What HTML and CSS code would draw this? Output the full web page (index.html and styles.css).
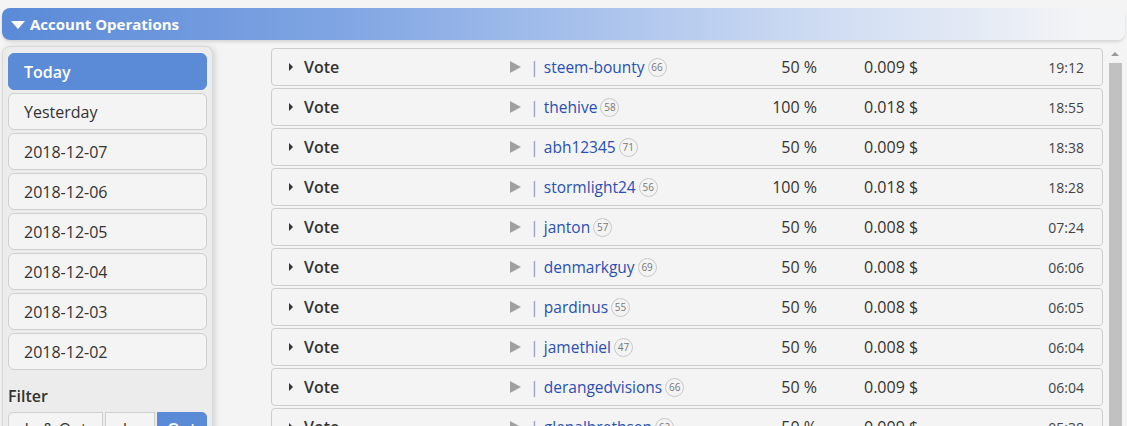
FILE: index.html
```html
<!DOCTYPE html>
<html lang="en">
<head>
    <meta charset="UTF-8">
    <meta name="viewport" content="width=device-width, initial-scale=1.0">
    <title>Account Operations</title>
    <link rel="stylesheet" href="styles.css">
</head>
<body>
    <div class="panel-header">
        <span class="caret-down"></span>
        <span class="panel-title">Account Operations</span>
    </div>

    <div class="panel-body">
        <div class="sidebar">
            <div class="day-list">
                <div class="day active">Today</div>
                <div class="day">Yesterday</div>
                <div class="day">2018-12-07</div>
                <div class="day">2018-12-06</div>
                <div class="day">2018-12-05</div>
                <div class="day">2018-12-04</div>
                <div class="day">2018-12-03</div>
                <div class="day">2018-12-02</div>
            </div>
            <div class="filter-label">Filter</div>
            <div class="filter-buttons">
                <button class="filter-btn">In &amp; Out</button>
                <button class="filter-btn">In</button>
                <button class="filter-btn active">Out</button>
            </div>
        </div>

        <div class="ops" id="ops"></div>

        <div class="scrollbar">
            <div class="scroll-up"></div>
            <div class="scroll-thumb"></div>
        </div>
    </div>

    <script>
        const votes = [
            ['steem-bounty', 66, 50, '0.009', '19:12'],
            ['thehive', 58, 100, '0.018', '18:55'],
            ['abh12345', 71, 50, '0.009', '18:38'],
            ['stormlight24', 56, 100, '0.018', '18:28'],
            ['janton', 57, 50, '0.008', '07:24'],
            ['denmarkguy', 69, 50, '0.008', '06:06'],
            ['pardinus', 55, 50, '0.008', '06:05'],
            ['jamethiel', 47, 50, '0.008', '06:04'],
            ['derangedvisions', 66, 50, '0.009', '06:04'],
            ['glenalbrethsen', 62, 50, '0.009', '05:38']
        ];

        const ops = document.getElementById('ops');
        votes.forEach(([name, rep, pct, amount, time]) => {
            const row = document.createElement('div');
            row.className = 'op-row';
            row.innerHTML = `
                <span class="caret-right"></span>
                <span class="op-type">Vote</span>
                <span class="op-target">
                    <span class="play"></span>
                    <span class="sep">|</span>
                    <a class="account" href="#">${name}</a>
                    <span class="rep">${rep}</span>
                </span>
                <span class="op-pct">${pct} %</span>
                <span class="op-amount">${amount} $</span>
                <span class="op-time">${time}</span>`;
            ops.appendChild(row);
        });
    </script>
</body>
</html>
```

FILE: styles.css
```css
body {
    margin: 0;
    font-family: 'Open Sans', 'Liberation Sans', sans-serif;
    background-color: #f4f4f4;
    color: #333;
    overflow: hidden;
    height: 426px;
}

.panel-header {
    display: flex;
    align-items: center;
    height: 32px;
    margin: 8px 2px 0 2px;
    padding-left: 9px;
    border-radius: 8px;
    background: linear-gradient(to right, #5a8ad7 0%, #80a5e3 30%, #adc5ed 55%, #d0ddf3 74%, #f3f4f6 96%);
    box-shadow: 0 2px 3px rgba(0, 0, 0, 0.12);
}

.caret-down {
    width: 0;
    height: 0;
    border-left: 7px solid transparent;
    border-right: 7px solid transparent;
    border-top: 8px solid #fff;
    margin-right: 5px;
    margin-top: 2px;
}

.panel-title {
    color: #fff;
    font-weight: bold;
    font-size: 15px;
}

.panel-body {
    display: flex;
    align-items: flex-start;
    margin-top: 6px;
}

.sidebar {
    width: 199px;
    margin-left: 2px;
    padding: 6px 5px 0 5px;
    background-color: #ececec;
    border: 1px solid #d8d8d8;
    border-radius: 8px;
    box-shadow: 2px 1px 6px rgba(0, 0, 0, 0.14);
    height: 400px;
}

.day-list {
    display: flex;
    flex-direction: column;
    gap: 3px;
}

.day {
    height: 35px;
    display: flex;
    align-items: center;
    padding-left: 15px;
    background-color: #f4f4f4;
    border: 1px solid #cfcfcf;
    border-radius: 6px;
    font-size: 16px;
}

.day.active {
    background-color: #5b8bd6;
    border-color: #5b8bd6;
    color: #fff;
    font-weight: 600;
}

.filter-label {
    margin: 15px 0 0 0;
    font-size: 16px;
    font-weight: 600;
}

.filter-buttons {
    display: flex;
    gap: 2px;
    margin-top: 5px;
}

.filter-btn {
    height: 34px;
    font-family: inherit;
    font-size: 16px;
    color: #333;
    background-color: #f4f4f4;
    border: 1px solid #cfcfcf;
    border-radius: 0;
    padding: 0;
}

.filter-btn:nth-child(1) { width: 96px; border-radius: 5px 0 0 5px; }
.filter-btn:nth-child(2) { width: 50px; }
.filter-btn:nth-child(3) { width: 51px; border-radius: 0 5px 5px 0; }

.filter-btn.active {
    background-color: #5b8bd6;
    border-color: #5b8bd6;
    color: #fff;
    font-weight: 600;
}

.ops {
    display: flex;
    flex-direction: column;
    gap: 2px;
    width: 832px;
    margin-left: 58px;
    margin-top: 2px;
}

.op-row {
    display: flex;
    align-items: center;
    height: 36px;
    padding-left: 17px;
    background-color: #f4f4f4;
    border: 1px solid #cdcdcd;
    border-radius: 4px;
    font-size: 16px;
}

.caret-right {
    width: 0;
    height: 0;
    border-top: 4px solid transparent;
    border-bottom: 4px solid transparent;
    border-left: 4px solid #333;
    margin-right: 11px;
}

.op-type {
    width: 206px;
    font-weight: 600;
}

.op-target {
    display: flex;
    align-items: center;
    width: 247px;
}

.play {
    width: 0;
    height: 0;
    border-top: 6px solid transparent;
    border-bottom: 6px solid transparent;
    border-left: 11px solid #a0a0a0;
    margin-right: 9px;
}

.sep {
    color: #8d98ab;
    margin-right: 5px;
}

.account {
    color: #2a4fb3;
    text-decoration: none;
    font-size: 15.5px;
}

.rep {
    display: inline-flex;
    align-items: center;
    justify-content: center;
    width: 17px;
    height: 17px;
    margin-left: 3px;
    border: 1px solid #c8c8c8;
    border-radius: 50%;
    font-size: 10px;
    color: #777;
}

.op-pct {
    width: 60px;
    text-align: right;
}

.op-amount {
    width: 120px;
    margin-left: 47px;
}

.op-time {
    flex: 1;
    text-align: right;
    padding-right: 18px;
    font-size: 14px;
    color: #444;
}

.scrollbar {
    display: flex;
    flex-direction: column;
    align-items: center;
    width: 14px;
    margin-left: 5px;
    height: 380px;
}

.scroll-up {
    width: 0;
    height: 0;
    border-left: 4px solid transparent;
    border-right: 4px solid transparent;
    border-bottom: 4px solid #999;
    margin-top: 6px;
}

.scroll-thumb {
    width: 13px;
    flex: 1;
    margin-top: 7px;
    background-color: #c1c1c1;
}
```
